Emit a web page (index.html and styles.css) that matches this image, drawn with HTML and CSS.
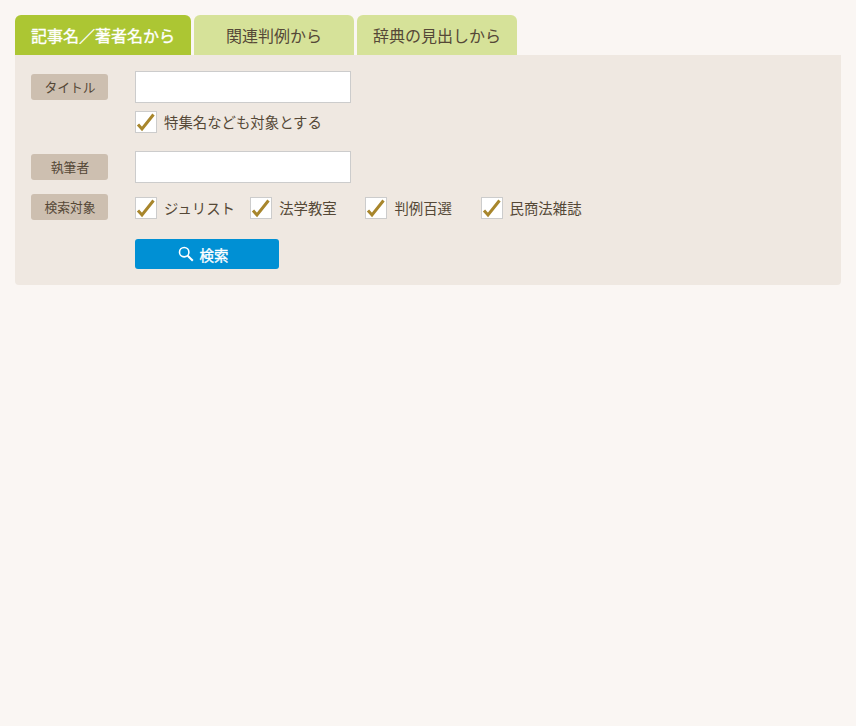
FILE: index.html
```html
<!DOCTYPE html>
<html lang="ja">
<head>
<meta charset="utf-8">
<title>検索</title>
<link rel="stylesheet" href="styles.css">
</head>
<body>
<div class="search">
  <div class="tabs">
    <a class="tab tab-active">記事名／著者名から</a>
    <a class="tab">関連判例から</a>
    <a class="tab">辞典の見出しから</a>
  </div>
  <form class="panel">
    <div class="row row-title">
      <span class="label">タイトル</span>
      <div class="field">
        <input class="text" type="text">
        <label class="check check-sub">
          <span class="box"><svg viewBox="0 0 20 20" width="20" height="20"><path d="M2 12.5 L6 17 L17.5 2.5" fill="none" stroke="#a8862c" stroke-width="3"/></svg></span>
          <span>特集名なども対象とする</span>
        </label>
      </div>
    </div>
    <div class="row row-author">
      <span class="label">執筆者</span>
      <div class="field"><input class="text" type="text"></div>
    </div>
    <div class="row row-target">
      <span class="label">検索対象</span>
      <div class="checks">
        <label class="check check-item"><span class="box"><svg viewBox="0 0 20 20" width="20" height="20"><path d="M2 12.5 L6 17 L17.5 2.5" fill="none" stroke="#a8862c" stroke-width="3"/></svg></span><span>ジュリスト</span></label>
        <label class="check check-item"><span class="box"><svg viewBox="0 0 20 20" width="20" height="20"><path d="M2 12.5 L6 17 L17.5 2.5" fill="none" stroke="#a8862c" stroke-width="3"/></svg></span><span>法学教室</span></label>
        <label class="check check-item"><span class="box"><svg viewBox="0 0 20 20" width="20" height="20"><path d="M2 12.5 L6 17 L17.5 2.5" fill="none" stroke="#a8862c" stroke-width="3"/></svg></span><span>判例百選</span></label>
        <label class="check check-item"><span class="box"><svg viewBox="0 0 20 20" width="20" height="20"><path d="M2 12.5 L6 17 L17.5 2.5" fill="none" stroke="#a8862c" stroke-width="3"/></svg></span><span>民商法雑誌</span></label>
      </div>
    </div>
    <div class="actions">
      <button class="submit" type="button">
        <svg viewBox="0 0 16 16" width="16" height="16"><circle cx="6.2" cy="6.2" r="4.7" fill="none" stroke="#fff" stroke-width="1.6"/><path d="M9.7 9.7 L14.8 14.8" stroke="#fff" stroke-width="2" fill="none"/></svg>
        <span>検索</span>
      </button>
    </div>
  </form>
</div>
</body>
</html>
```
FILE: styles.css
```css
* { box-sizing: border-box; }
html, body { margin: 0; height: 100%; }
body {
  background: #faf6f3;
  color: #554837;
  font-family: "Noto Sans CJK JP", "Noto Sans", sans-serif;
  font-size: 14.4px;
}
.search { padding: 15px 15px 0; }
.tabs { display: flex; gap: 3px; height: 40px; }
.tab {
  width: 160px;
  display: flex;
  align-items: center;
  justify-content: center;
  background: #d6e299;
  border-radius: 6px 6px 0 0;
  font-size: 16px;
  line-height: 1;
}
.tab-active {
  width: 176px;
  background: #acc633;
  color: #fff;
  -webkit-text-stroke: 0.35px #fff;
}
.panel { background: #efe8e1; padding: 16px; height: 230px; border-radius: 0 0 4px 4px; }
.row { display: flex; }
.label {
  width: 77px;
  height: 26px;
  margin-right: 27px;
  display: flex;
  align-items: center;
  justify-content: center;
  padding: 1px 0 0 1px;
  background: #cdbfb0;
  border-radius: 3px;
  font-size: 12.8px;
  line-height: 1;
  flex: none;
}
.row-title .label { margin-top: 3px; }
.row-author { margin-top: 18px; }
.row-author .label { margin-top: 3px; }
.row-target { margin-top: 11px; }
.text {
  display: block;
  width: 216px;
  height: 32px;
  background: #fff;
  border: 1px solid #ccc;
  margin: 0;
  padding: 0 6px;
}
.check { display: flex; align-items: center; line-height: 22px; }
.check-sub { margin-top: 8px; }
.box {
  width: 22px;
  height: 22px;
  margin-right: 7px;
  flex: none;
  background: #fff;
  border: 1px solid #ccc;
  display: block;
}
.box svg { display: block; }
.checks { display: flex; padding-top: 3px; margin-top: -1px; }
.check-item { width: 115.2px; }
.actions { margin: 19px 0 0 104px; }
.submit {
  width: 144px;
  height: 30px;
  display: flex;
  align-items: center;
  justify-content: center;
  gap: 6px;
  background: #0090d4;
  color: #fff;
  border: 0;
  border-radius: 3px;
  padding: 0 8px 0 0;
  font: 400 14.4px "Noto Sans CJK JP", "Noto Sans", sans-serif;
  -webkit-text-stroke: 0.35px #fff;
}
```
